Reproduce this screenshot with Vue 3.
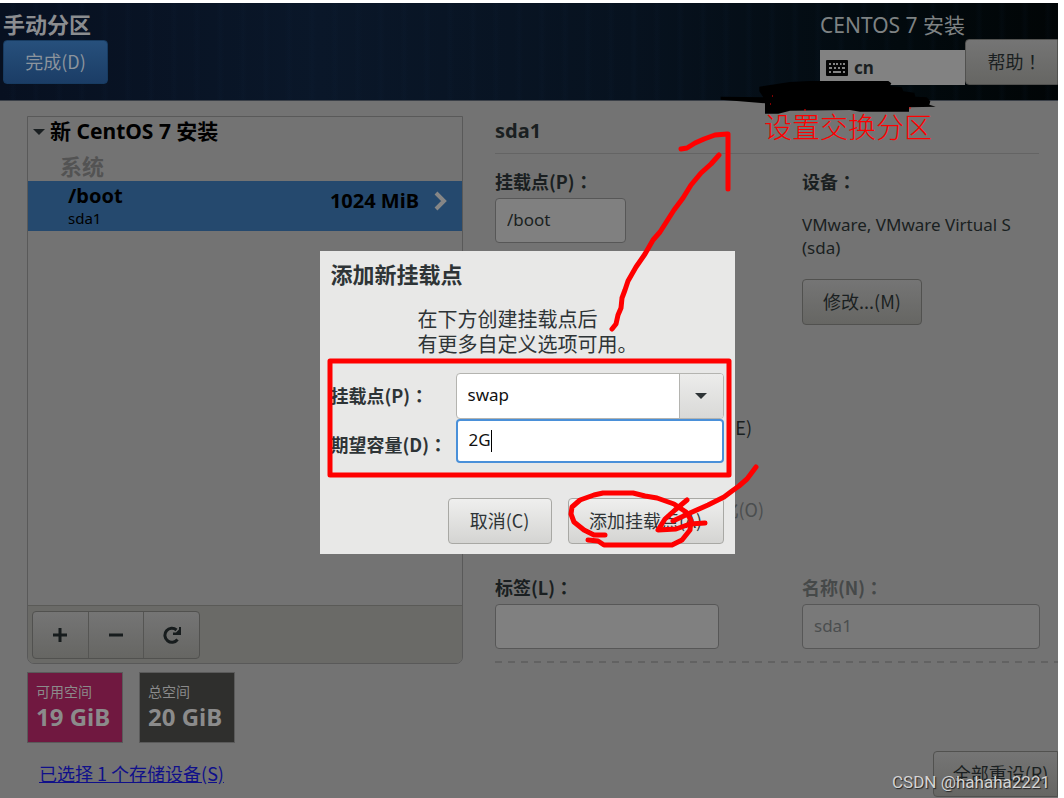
<script setup>
import { ref } from 'vue'

const mount = ref('/boot')
const label = ref('')
const name = ref('sda1')
const newMount = ref('swap')
const capacity = ref('2G')
</script>

<template>
  <div class="screen">
    <header class="top">
      <div class="top-left">
        <h1>手动分区</h1>
        <button class="done" type="button">完成(D)</button>
      </div>
      <div class="top-right">
        <p class="product">CENTOS 7 安装</p>
        <div class="top-tools">
          <div class="keyboard">
            <svg width="22" height="16" viewBox="0 0 22 16" aria-hidden="true">
              <rect width="22" height="16" rx="1" fill="#050505" />
              <path d="M3 4h2M7 4h2M10 4h2M14 4h1.500M17 4h2M3 8h3M8 8h2M12 8h2M16 8h3M3 12h2M7 12h8M17 12h2" stroke="#848484" stroke-width="2" />
            </svg>
            <span>cn</span>
          </div>
          <button class="btn help" type="button">帮助<span class="mid">！</span></button>
        </div>
      </div>
    </header>

    <main class="body">
      <section class="left">
        <div class="panel">
          <div class="tree">
            <h2><svg width="12" height="8" viewBox="0 0 12 8" aria-hidden="true"><path d="M0 1h12L6 7z" fill="#1a1f21" /></svg>新 CentOS 7 安装</h2>
            <h3>系统</h3>
            <div class="row">
              <div class="row-name"><strong>/boot</strong><span>sda1</span></div>
              <strong class="row-size">1024 MiB</strong>
              <svg width="14" height="20" viewBox="0 0 14 20" aria-hidden="true"><path d="M2 2l8 8-8 8" fill="none" stroke="#868686" stroke-width="4" /></svg>
            </div>
          </div>
          <div class="toolbar">
            <div class="group">
              <button type="button" aria-label="添加">
                <svg width="16" height="16" viewBox="0 0 16 16"><path d="M8 1v14M1 8h14" stroke="#171c1d" stroke-width="3" /></svg>
              </button>
              <button type="button" aria-label="删除">
                <svg width="16" height="16" viewBox="0 0 16 16"><path d="M1 8h14" stroke="#171c1d" stroke-width="3" /></svg>
              </button>
              <button type="button" aria-label="刷新">
                <svg width="20" height="18" viewBox="0 0 20 18"><path d="M15.500 13.500A7 7 0 1 1 14.500 4" fill="none" stroke="#171c1d" stroke-width="3" /><path d="M19 1v8h-8v-2.500h3L17 3.500V1z" fill="#171c1d" /></svg>
              </button>
            </div>
          </div>
        </div>
        <div class="totals">
          <div class="tile free"><span>可用空间</span><strong>19 GiB</strong></div>
          <div class="tile all"><span>总空间</span><strong>20 GiB</strong></div>
        </div>
        <a class="devices" href="#">已选择 1 个存储设备(S)</a>
      </section>

      <section class="right">
        <h2 class="title">sda1</h2>
        <div class="fields">
          <div class="field">
            <label for="mount">挂载点(P)<span class="mid">：</span></label>
            <input id="mount" v-model="mount" class="entry short" type="text">
          </div>
          <div class="field">
            <p class="caption">设备<span class="mid">：</span></p>
            <p class="device">VMware, VMware Virtual S<br>(sda)</p>
            <button class="btn modify" type="button">修改...(M)</button>
          </div>
        </div>
        <div class="checks">
          <label class="encrypt"><input type="checkbox">加密(E)</label>
          <label class="format"><input type="checkbox" disabled>重新格式化(O)</label>
        </div>
        <div class="fields">
          <div class="field">
            <label for="label">标签(L)<span class="mid">：</span></label>
            <input id="label" v-model="label" class="entry medium" type="text">
          </div>
          <div class="field">
            <label for="name" class="off">名称(N)<span class="mid">：</span></label>
            <input id="name" v-model="name" class="entry wide" type="text" disabled>
          </div>
        </div>
        <div class="dashes"></div>
        <button class="btn reset" type="button">全部重设(R)</button>
      </section>
    </main>

    <div class="layer">
      <form class="dialog" role="dialog" aria-labelledby="dialog-title" @submit.prevent>
        <h2 id="dialog-title">添加新挂载点</h2>
        <p class="hint">在下方创建挂载点后<br>有更多自定义选项可用。</p>
        <div class="form">
          <label for="new-mount">挂载点(P)<span class="mid">：</span></label>
          <div class="combo">
            <input id="new-mount" v-model="newMount" type="text">
            <button type="button" aria-label="展开"><svg width="14" height="8" viewBox="0 0 14 8"><path d="M1 1h12L7 7z" fill="#2e3436" /></svg></button>
          </div>
          <label for="capacity" class="lower">期望容量(D)<span class="mid">：</span></label>
          <div class="active">
            <input id="capacity" v-model="capacity" type="text">
            <i class="caret"></i>
          </div>
        </div>
        <div class="actions">
          <button class="btn light" type="button">取消(C)</button>
          <button class="btn light add" type="submit">添加挂载点(A)</button>
        </div>
      </form>
    </div>

    <svg class="ink" width="1058" height="798" viewBox="0 0 1058 798" aria-hidden="true">
      <path transform="translate(700 0) scale(.33333)" fill="#000" d="M62 290 L190 292 178 274 178 260 270 246 330 243 565 243 574 250 570 258 605 262 610 274 643 278 646 290 680 292 691 304 688 314 707 320 627 322 627 335 480 335 450 330 270 332 235 341 195 341 195 310 120 304 62 299z" />
      <path d="M772 96h1M770 104h1M804 110h2M909 108h2" stroke="#f00" stroke-width="1" />
      <g fill="none" stroke="#f00" stroke-width="5" stroke-linecap="round" stroke-linejoin="round">
        <path d="M612 329L616 324 618 315 621 308 622 298 625 290 628 281 636 267 645 254 653 240 660 232 667 221 674 210 683 198 691 185 701 173 711 164 719 155" />
        <path d="M681 149L687 148 695 143 704 139 715 135 727 134 728 134V189" />
        <path d="M330 361H729V475H330z" />
        <path d="M605 535L594 535 584 530 574 522 571 514 572 507 580 500 594 495 603 493 633 493 645 496 657 498 674 504 686 512 691 520 690 530 682 540 672 545H604L598 541 588 540" />
        <path d="M756 467L747 479 739 486 732 491 724 497 708 505 690 513 673 521" />
        <path d="M687 500L675 510 665 519 658 530 676 529 690 524 705 523" />
      </g>
    </svg>
    <p class="note">设置交换分区</p>
    <p class="mark">CSDN @hahaha2221</p>
  </div>
</template>

<style>
body {
  margin: 0;
  background: #fff;
}
</style>

<style scoped>
* {
  box-sizing: border-box;
}
h1, h2, h3, p {
  margin: 0;
}
.screen {
  position: relative;
  min-height: 100vh;
  padding: 3px 6px 0 0;
  font: 18px/24px "Noto Sans CJK SC", sans-serif;
  color: #1a1f21;
  overflow: hidden;
}
button, input {
  font: inherit;
  color: inherit;
  margin: 0;
}
h2, strong {
  font-family: "Noto Sans", "Noto Sans CJK SC", sans-serif;
}
.mid {
  font-family: "Noto Sans CJK TC", sans-serif;
}
.top {
  display: flex;
  justify-content: space-between;
  height: 98px;
  border-bottom: 1px solid #3b4048;
  background:
    repeating-linear-gradient(90deg, #12284400 0 9px, #12284418 13px, #12284400 17px 23px),
    linear-gradient(90deg, #071020, #0a1729 30%, #07121f 60%, #020a0e 85%, #010506);
}
.top-left {
  padding: 4px 3px 0;
}
h1 {
  font-size: 22px;
  line-height: 32px;
  color: #8b8d90;
}
.done {
  display: block;
  width: 105px;
  height: 44px;
  margin-top: 1px;
  padding: 0 0 2px;
  border: 1px solid #173b61;
  border-radius: 4px;
  background: linear-gradient(#27507c, #1b3d66);
  color: #8c949d;
}
.top-right {
  width: 238px;
}
.product {
  padding-top: 8px;
  font: 21px/28px "Noto Sans", "Noto Sans CJK SC", sans-serif;
  color: #7e8283;
}
.top-tools {
  display: flex;
  align-items: flex-end;
}
.keyboard {
  flex: none;
  display: flex;
  align-items: center;
  gap: 6px;
  width: 145px;
  height: 35px;
  padding-left: 6px;
  background: #828282;
  font: 700 17px/24px "Noto Sans", sans-serif;
}
.btn {
  height: 46px;
  padding: 0 0 2px;
  border: 1px solid #51514f;
  border-radius: 4px;
  background: linear-gradient(#757575, #666663);
  white-space: nowrap;
}
.btn.help {
  flex: 1;
  padding-left: 6px;
  border-radius: 4px 0 0 4px;
}
.body {
  display: flex;
  gap: 32px;
  min-height: calc(100vh - 101px);
  padding: 15px 0 0 27px;
  background: #737373;
}
.left {
  width: 436px;
}
.panel {
  display: flex;
  flex-direction: column;
  height: 548px;
  border: 1px solid #595959;
  border-radius: 0 0 7px 7px;
  overflow: hidden;
}
.tree {
  flex: 1;
}
.tree h2 {
  display: flex;
  align-items: center;
  gap: 5px;
  padding-left: 5px;
  font-size: 21px;
  line-height: 29px;
  color: #000;
}
.tree h3 {
  padding: 3px 0 0 32px;
  font-size: 22px;
  line-height: 32px;
  color: #535353;
}
.row {
  display: flex;
  align-items: center;
  height: 50px;
  padding: 0 14px 10px 40px;
  background: #25496e;
  color: #000;
}
.row-name {
  flex: 1;
  padding-top: 9px;
}
.row-name span {
  display: block;
  font: 15px/20px "Noto Sans", sans-serif;
}
.row strong {
  font-size: 20px;
}
.row-size {
  margin-right: 15px;
}
.toolbar {
  height: 58px;
  padding: 5px 4px;
  border-top: 1px solid #5a5a57;
  background: #6a6a67;
}
.group {
  display: flex;
  width: 168px;
  border: 1px solid #51514f;
  border-radius: 4px;
  background: linear-gradient(#757575, #666663);
}
.group button {
  flex: 1;
  display: grid;
  place-items: center;
  height: 46px;
  padding: 0;
  border: 0;
  border-left: 1px solid #555553;
  background: none;
}
.group button:first-child {
  border-left: 0;
}
.totals {
  display: flex;
  gap: 16px;
  padding-top: 8px;
}
.tile {
  width: 96px;
  height: 71px;
  padding: 7px 8px;
  border: 1px solid #5a5a5a;
  color: #8b8b8b;
}
.tile span, .tile strong {
  display: block;
  white-space: nowrap;
}
.tile span {
  font-size: 14px;
  line-height: 22px;
}
.tile strong {
  font-size: 24px;
  line-height: 30px;
}
.free {
  background: #701840;
}
.all {
  background: #2f2f2d;
}
.devices {
  display: inline-block;
  margin: 18px 12px 0;
  color: #10108a;
}
.right {
  flex: 1;
  display: flex;
  flex-direction: column;
}
.title {
  height: 38px;
  margin-right: 19px;
  border-bottom: 1px solid #646464;
  font-size: 20px;
  line-height: 30px;
}
.fields {
  display: grid;
  grid-template-columns: 307px 1fr;
}
.field label, .caption {
  display: block;
  line-height: 26px;
  font-weight: 700;
}
.title + .fields {
  padding-top: 14px;
  height: 240px;
}
.entry {
  display: block;
  height: 45px;
  margin-top: 4px;
  padding: 0 11px 2px;
  border: 1px solid #575757;
  border-radius: 4px;
  background: #808080;
  font: 17px/24px "Noto Sans", sans-serif;
}
.short {
  width: 131px;
}
.medium {
  width: 224px;
}
.wide {
  width: 238px;
}
.entry:disabled {
  background: #797979;
  color: #4b4e4f;
}
.field .off {
  color: #464949;
}
.device {
  padding: 19px 0 20px;
  font: 17px/23px "Noto Sans", sans-serif;
}
.modify {
  width: 120px;
}
.checks {
  height: 180px;
}
.checks label {
  display: flex;
  align-items: center;
  justify-content: flex-end;
  gap: 8px;
  height: 24px;
}
.encrypt {
  width: 257px;
  margin-top: 21px;
}
.checks .format {
  width: 269px;
  margin-top: 58px;
  color: #4b4e4f;
}
.dashes {
  height: 2px;
  margin-top: 12px;
  background: repeating-linear-gradient(90deg, #626262 0 7px, #737373 7px 13px);
}
.reset {
  align-self: flex-end;
  width: 125px;
  margin: 88px 0 0;
  padding-right: 0;
  padding-left: 10px;
  border-radius: 4px 0 0 4px;
}
.layer {
  position: absolute;
  inset: 7px 10px 0 0;
  display: grid;
  place-items: center;
}
.dialog {
  width: 415px;
  height: 303px;
  padding: 6px 11px 10px;
  background: #e8e8e7;
  color: #2e3436;
}
.dialog h2 {
  font-size: 22px;
  line-height: 34px;
}
.hint {
  padding: 15px 0 17px 87px;
  font-size: 20px;
  line-height: 25px;
}
.form {
  display: grid;
  grid-template-columns: 125px 1fr;
  align-items: center;
}
.form label {
  padding-bottom: 2px;
  font-weight: 700;
  white-space: nowrap;
}
.form .lower {
  padding: 6px 0 0;
}
.combo {
  display: flex;
  height: 46px;
  border: 1px solid #b4b4b0;
  border-radius: 4px;
  overflow: hidden;
  background: #fff;
}
.form input {
  flex: 1;
  min-width: 0;
  width: 100%;
  padding: 0 11px 2px;
  border: 0;
  outline: 0;
  background: none;
  font: 17px/24px "Noto Sans", sans-serif;
  color: #111;
}
.combo button {
  display: grid;
  place-items: center;
  width: 44px;
  padding: 0;
  border: 0;
  border-left: 1px solid #b4b4b0;
  background: linear-gradient(#ececeb, #d9d9d7);
}
.active {
  position: relative;
  display: flex;
  height: 44px;
  border: 2px solid #4a90d9;
  border-radius: 4px;
  background: #fff;
}
.caret {
  position: absolute;
  left: 33px;
  top: 9px;
  width: 1px;
  height: 22px;
  background: #000;
}
.actions {
  display: flex;
  justify-content: flex-end;
  gap: 16px;
  padding-top: 35px;
}
.light {
  width: 104px;
  border-color: #a8a8a4;
  background: linear-gradient(#efefee, #d4d4d2);
}
.light.add {
  width: 156px;
}
.ink {
  position: absolute;
  left: 0;
  top: 0;
}
.note {
  position: absolute;
  left: 764px;
  top: 107px;
  font: 300 28px/38px "Noto Sans CJK SC", sans-serif;
  color: #f00;
}
.mark {
  position: absolute;
  right: 14px;
  bottom: 4px;
  font: 17px/24px Roboto, sans-serif;
  color: #d4d4d4;
  text-shadow: 1px 1px 1px #222;
}
</style>
